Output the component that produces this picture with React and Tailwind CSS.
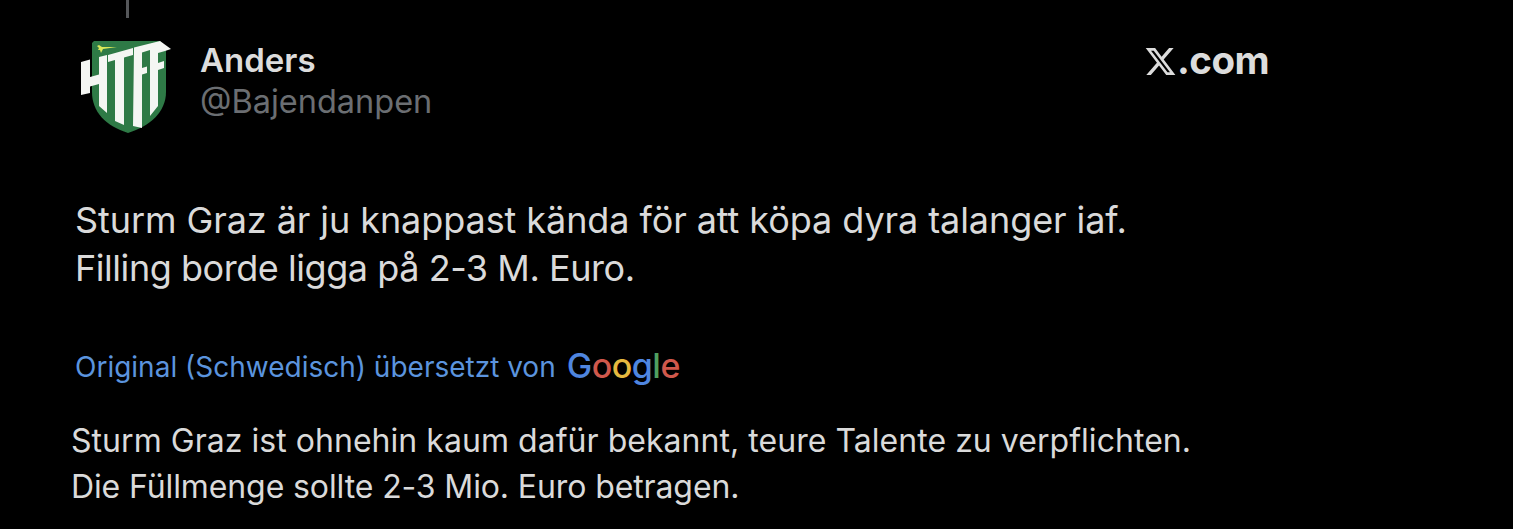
const ClubLogo = () => (
  <svg width="100" height="100" viewBox="75 37 100 100" className="shrink-0">
    <path d="M94 41 H160 L166 48 V92 C166 112 150 126 128 133 C106 126 92 112 92 92 V43 Z" fill="#2e7a46" />
    <path d="M99 45 L102 47 L117 47 L103 49 L101 53 L100 50 L98 50 L99 48 L97 46 Z" fill="#d8e85a" />
    {/* H */}
    <path d="M81 62 L90 59.5 V77 L99 74.5 V57 L107 55 V113 L99 106 V84 L90 86.5 V93 L81 95 Z" fill="#f4f6f3" />
    {/* T */}
    <path d="M108 55 L133 48 V55 L124 57.5 V125 L115 121 V60 L108 62 Z" fill="#f4f6f3" />
    {/* F F */}
    <path d="M134 47.5 L150 43.5 V50 L142 52.5 V68 L147 66.5 V73 L142 74.5 V128 L133 126 Z" fill="#f4f6f3" />
    <path d="M150 43.5 L160 41 L171 49 L165 51 L158 53 V63 L164 61 V68 L158 70 V106 L150 116 Z" fill="#f4f6f3" />
  </svg>
);

const XMark = () => (
  <svg width="33" height="33" viewBox="0 0 24 24" fill="#dcdcdc" className="shrink-0">
    <path d="M18.24 2.25h3.31l-7.23 8.26 8.5 11.24h-6.66l-5.21-6.82-5.97 6.82H1.68l7.73-8.84L1.25 2.25h6.83l4.71 6.23zm-1.16 17.52h1.83L7.08 4.13H5.12z" />
  </svg>
);

const App = () => {
  return (
    <div className="h-[529px] w-[1513px] overflow-hidden bg-black font-['Inter','Noto_Sans',sans-serif]">
      <div className="ml-[126px] h-[18px] w-[3px] bg-[#55575a]" />

      <div className="mt-[19px] flex pl-[75px]">
        <ClubLogo />
        <div className="ml-[25px] mt-[2px] w-[944px]">
          <p className="text-[33px] font-semibold leading-[42px] text-[#dcdcdc]">Anders</p>
          <p className="text-[32.5px] leading-[42px] text-[#6b6e72]">@Bajendanpen</p>
        </div>
        <div className="mt-[1px] flex h-[46px] items-center">
          <XMark />
          <span className="text-[38.5px] font-bold tracking-[-0.5px] text-[#dcdcdc]">.com</span>
        </div>
      </div>

      <div className="mt-[59px] pl-[75px] text-[36px] leading-[48px] text-[#dadada]">
        <p className="tracking-[-0.08px]">Sturm Graz är ju knappast kända för att köpa dyra talanger iaf.</p>
        <p className="tracking-[-0.45px]">Filling borde ligga på 2-3 M. Euro.</p>
      </div>

      <div className="mt-[52px] flex items-center pl-[75px] text-[28px] leading-[46px] text-[#5b94de]">
        <span>Original (Schwedisch) übersetzt von</span>
        <span className="ml-[11px] -mt-[3px] text-[34px] font-medium tracking-[-0.5px]">
          <span className="text-[#4f86e0]">G</span>
          <span className="text-[#d0584c]">o</span>
          <span className="text-[#e6b93f]">o</span>
          <span className="text-[#4f86e0]">g</span>
          <span className="text-[#4fa060]">l</span>
          <span className="text-[#d0584c]">e</span>
        </span>
      </div>

      <div className="mt-[28px] pl-[71px] text-[32px] leading-[46px] text-[#dadada]">
        <p className="tracking-[0.04px]">Sturm Graz ist ohnehin kaum dafür bekannt, teure Talente zu verpflichten.</p>
        <p className="tracking-[-0.11px]">Die Füllmenge sollte 2-3 Mio. Euro betragen.</p>
      </div>
    </div>
  );
};

export default App;
